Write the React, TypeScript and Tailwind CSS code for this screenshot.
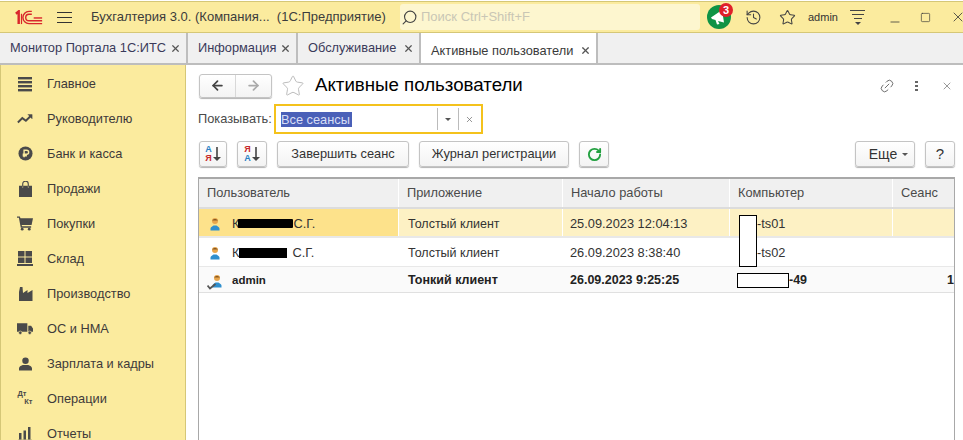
import { ArrowLeft, ArrowRight, Star, History, Link2, RotateCw, Search, X, Minus, Square } from "lucide-react";

const F = "font-['Liberation_Sans',Arial,sans-serif]";

function MenuIcon({ name }: { name: string }) {
  const c = "#4a4a4a";
  switch (name) {
    case "main":
      return (
        <svg width="16" height="16" viewBox="0 0 16 16" fill={c}>
          <rect x="1" y="1" width="14" height="2.4" />
          <rect x="1" y="5" width="14" height="2.4" />
          <rect x="1" y="9" width="14" height="2.4" />
          <rect x="1" y="13" width="14" height="2.4" />
        </svg>
      );
    case "chart":
      return (
        <svg width="17" height="16" viewBox="0 0 18 16" fill="none" stroke={c} strokeWidth="2.2">
          <path d="M1 12l5-5 4 3 6-6" />
          <path d="M12 3h5v5" fill={c} strokeWidth="0.5" />
        </svg>
      );
    case "bank":
      return (
        <svg width="15" height="15" viewBox="0 0 16 16">
          <circle cx="8" cy="8" r="7.5" fill={c} />
          <path d="M6.5 12V4.5h2.7a2 2 0 010 4.3H5M5 10.4h4.5" fill="none" stroke="#fbeb9e" strokeWidth="1.5" />
        </svg>
      );
    case "bag":
      return (
        <svg width="13" height="16" viewBox="0 0 14 17" fill={c}>
          <path d="M0 5h3.5v2h1V5h5v2h1V5H14v12H0z" />
          <path d="M4 6V3a3 3 0 016 0v3" fill="none" stroke={c} strokeWidth="1.2" />
        </svg>
      );
    case "cart":
      return (
        <svg width="17" height="15" viewBox="0 0 17 15" fill={c}>
          <path d="M0 0h3l.7 2H17l-1.5 7H5l.3 1.5H15V12H4L2 1.5H0z" />
          <circle cx="5.5" cy="13.5" r="1.5" />
          <circle cx="13" cy="13.5" r="1.5" />
        </svg>
      );
    case "stock":
      return (
        <svg width="16" height="15" viewBox="0 0 16 15" fill={c}>
          <rect x="1" y="0" width="6.5" height="5.5" />
          <rect x="8.5" y="0" width="6.5" height="5.5" />
          <rect x="1" y="6.5" width="6.5" height="5.5" />
          <rect x="8.5" y="6.5" width="6.5" height="5.5" />
          <rect x="0" y="13" width="16" height="2" />
        </svg>
      );
    case "factory":
      return (
        <svg width="15" height="14" viewBox="0 0 15 14" fill={c}>
          <path d="M1 14V5l1-5h2.500l.5 6 4.500-3v3l5-3v11z" />
        </svg>
      );
    case "truck":
      return (
        <svg width="17" height="12" viewBox="0 0 17 12" fill={c}>
          <path d="M0 0h11v9H0zM12 2.500h3l2 3V9h-5z" />
          <circle cx="3.500" cy="10" r="1.800" stroke="#fbeb9e" strokeWidth="0.6" />
          <circle cx="13.500" cy="10" r="1.800" stroke="#fbeb9e" strokeWidth="0.6" />
        </svg>
      );
    case "user":
      return (
        <svg width="13" height="14" viewBox="0 0 14 14" fill={c}>
          <circle cx="7" cy="3.600" r="3.500" />
          <path d="M0 14v-2.500c0-2 3-3 4-3.500h6c1 .5 4 1.500 4 3.500V14z" />
        </svg>
      );
    case "ops":
      return (
        <div className="flex h-[17px] w-[15px] flex-col text-[7.500px] font-bold leading-[8px] text-[#4a4a4a]">
          <span className="self-start">Дт</span>
          <span className="self-end">Кт</span>
        </div>
      );
    default:
      return (
        <svg width="14" height="14" viewBox="0 0 14 14" fill={c}>
          <rect x="1" y="6" width="2.500" height="6.500" />
          <rect x="5.500" y="3.500" width="2.500" height="9" />
          <rect x="10" y="0" width="2.500" height="12.500" />
          <rect x="0" y="12.800" width="14" height="1.200" />
        </svg>
      );
  }
}

const menu = [
  ["main", "Главное"],
  ["chart", "Руководителю"],
  ["bank", "Банк и касса"],
  ["bag", "Продажи"],
  ["cart", "Покупки"],
  ["stock", "Склад"],
  ["factory", "Производство"],
  ["truck", "ОС и НМА"],
  ["user", "Зарплата и кадры"],
  ["ops", "Операции"],
  ["reports", "Отчеты"],
];

function Logo() {
  return (
    <svg width="30" height="15" viewBox="0 0 30 16" fill="none" stroke="#d9262c">
      <path d="M1 4l3-2.500V15" strokeWidth="2.600" />
      <path d="M7 15V4" strokeWidth="1.300" />
      <path d="M29 14.500H15a6.500 6.500 0 110-13h3" strokeWidth="1.500" />
      <path d="M29 11.500H15a3.500 3.500 0 110-7h3" strokeWidth="1.500" />
      <path d="M20 8.500h9" strokeWidth="1.500" />
    </svg>
  );
}

function PersonIcon({ check }: { check?: boolean }) {
  return (
    <svg width="18" height="18" viewBox="0 0 18 18" className="shrink-0">
      <circle cx={check ? 10 : 8} cy="6" r="3" fill="#e8a64c" />
      <path d={check ? "M7.300 5.500c.7-2 4.700-2 5.400 0z" : "M5.300 5.500c.7-2 4.700-2 5.400 0z"} fill="#8a5a24" />
      <path d={check ? "M5.500 15.500v-2c0-1.500 2.500-2.500 3-3h3c.5.5 3 1.500 3 3v2z" : "M3.500 15.500v-2c0-1.500 2.500-2.500 3-3h3c.5.5 3 1.500 3 3v2z"} fill="#2f8fce" />
      {check && <path d="M.5 13.500l2.500 3L8.500 12" fill="none" stroke="#555" strokeWidth="1.800" />}
    </svg>
  );
}

function Btn({ className, children }: { className: string; children: React.ReactNode }) {
  return (
    <div
      className={`flex h-[26px] shrink-0 items-center justify-center rounded-[3px] border border-[#c4c4c4] bg-gradient-to-b from-white to-[#f3f3f3] text-[12.800px] text-[#333] shadow-[0_1px_1px_rgba(0,0,0,0.3)] ${className}`}
    >
      {children}
    </div>
  );
}

function SortIcon({ reverse }: { reverse?: boolean }) {
  const blue = "text-[#2a7fc4]";
  const red = "text-[#c8282c]";
  return (
    <div className="flex items-center gap-px">
      <div className="flex flex-col text-[9px] font-bold leading-[9px]">
        <span className={reverse ? red : blue}>{reverse ? "Я" : "А"}</span>
        <span className={reverse ? blue : red}>{reverse ? "А" : "Я"}</span>
      </div>
      <svg width="8" height="14" viewBox="0 0 8 14" fill="#444">
        <path d="M3.200 0h1.600v10H8l-4 4-4-4h3.200z" />
      </svg>
    </div>
  );
}

function Cell({ width, className = "", children }: { width: string; className?: string; children?: React.ReactNode }) {
  return <div className={`flex h-full shrink-0 items-center ${width} ${className}`}>{children}</div>;
}

export default function App() {
  return (
    <div className={`${F} flex h-[440px] w-[963px] flex-col overflow-hidden bg-white text-[13px] text-[#333]`}>
      {/* top bar */}
      <div className="mt-px flex h-[32px] shrink-0 items-center border-y border-[#d5c777] bg-[#fbeb9e]">
        <div className="ml-[14px] w-[30px] shrink-0">
          <Logo />
        </div>
        <div className="ml-[13px] flex w-[15px] shrink-0 flex-col gap-[4px]">
          <div className="h-px bg-[#333]" />
          <div className="h-px bg-[#333]" />
          <div className="h-px bg-[#333]" />
        </div>
        <div className="ml-[19px] w-[309px] shrink-0 whitespace-pre text-[13px] text-[#3c3c3c]">Бухгалтерия 3.0. (Компания...  (1С:Предприятие)</div>
        <div className="flex h-[26px] w-[300px] shrink-0 items-center rounded-[3px] bg-[#fdf6cf] pl-[1px]">
          <Search size={17} strokeWidth={1.6} className="shrink-0 -scale-x-100 text-[#444]" />
          <span className="ml-[3px] text-[13px] text-[#c9c6b5]">Поиск Ctrl+Shift+F</span>
        </div>
        <div className="relative ml-[7px] flex h-[24px] w-[24px] shrink-0 items-center justify-center rounded-full bg-[#0f9345]">
          <svg width="16" height="16" viewBox="0 0 16 16" fill="#fff">
            <path d="M0 8.500L11 1l2 12.500L7 12l1.500 3-2.500.5L4.500 11 1 10z" />
          </svg>
          <div className="absolute -right-[2px] -top-[2px] flex h-[14px] w-[14px] items-center justify-center rounded-full bg-[#e0202a] text-[11px] font-bold text-white">3</div>
        </div>
        <History size={17} strokeWidth={1.5} className="ml-[14px] shrink-0 text-[#444]" />
        <Star size={17} strokeWidth={1.5} className="ml-[17px] shrink-0 text-[#444]" />
        <span className="ml-[12px] w-[28px] shrink-0 text-[11px] text-[#333]">admin</span>
        <div className="ml-[14px] flex w-[15px] shrink-0 flex-col items-center gap-[3px]">
          <div className="h-px w-[15px] bg-[#444]" />
          <div className="h-px w-[12px] bg-[#444]" />
          <div className="h-px w-[8px] bg-[#444]" />
          <div className="h-0 w-0 border-x-[3px] border-t-[3px] border-x-transparent border-t-[#444]" />
        </div>
        <Minus size={14} strokeWidth={1.3} className="ml-[23px] mt-[10px] shrink-0 text-[#333]" />
        <Square size={11} strokeWidth={1.4} className="ml-[18px] shrink-0 text-[#333]" />
        <X size={16} strokeWidth={1.200} className="ml-[19px] shrink-0 text-[#333]" />
      </div>

      {/* tabs */}
      <div className="flex h-[32px] shrink-0 border-b-2 border-[#bdbdbd] bg-[#f0f0f0]">
        {[
          ["Монитор Портала 1С:ИТС", "w-[188px]"],
          ["Информация", "w-[110px]"],
          ["Обслуживание", "w-[123px]"],
        ].map(([label, w]) => (
          <div key={label} className={`flex items-center justify-between border-r-2 border-[#bdbdbd] pl-[10px] pr-[5px] text-[12.800px] text-[#3a3a5a] ${w}`}>
            <span>{label}</span>
            <X size={11} strokeWidth={2.600} className="shrink-0 text-[#555]" />
          </div>
        ))}
        <div className="flex w-[177px] flex-col border-r-2 border-[#bdbdbd] bg-white pt-[8px]">
          <div className="flex items-center justify-between pl-[10px] pr-[5px] text-[12.800px] text-[#3a3a3a]">
            <span>Активные пользователи</span>
            <X size={11} strokeWidth={2.600} className="shrink-0 text-[#555]" />
          </div>
          <div className="mx-[3px] mt-[5px] h-[2px] bg-[#0f9345]" />
        </div>
      </div>

      <div className="flex min-h-0 flex-1">
        {/* sidebar */}
        <div className="flex w-[186px] shrink-0 flex-col border-x border-[#d5c777] bg-[#fbeb9e] pt-[1px]">
          {menu.map(([icon, label]) => (
            <div key={label} className="flex h-[35px] shrink-0 items-center">
              <div className="ml-[16px] flex w-[16px] justify-center">
                <MenuIcon name={icon} />
              </div>
              <span className="ml-[14px] text-[12.800px] text-[#3e3a3a]">{label}</span>
            </div>
          ))}
        </div>

        {/* form */}
        <div className="min-w-0 flex-1 pl-[13px] pt-[8px]">
          <div className="flex h-[25px] items-center pr-[10px]">
            <div className="flex h-[24px] w-[73px] shrink-0 rounded-[3px] border border-[#c4c4c4] bg-gradient-to-b from-white to-[#f3f3f3] shadow-[0_1px_1px_rgba(0,0,0,0.3)]">
              <div className="flex w-[36px] items-center justify-center border-r border-[#d8d8d8]">
                <ArrowLeft size={15} strokeWidth={2.800} className="text-[#444]" />
              </div>
              <div className="flex flex-1 items-center justify-center">
                <ArrowRight size={15} strokeWidth={2.800} className="text-[#aaa]" />
              </div>
            </div>
            <Star size={24} strokeWidth={1} className="ml-[9px] shrink-0 text-[#bdbdbd]" />
            <span className="ml-[10px] text-[18.700px] leading-none text-black">Активные пользователи</span>
            <Link2 size={16} strokeWidth={1.200} className="ml-auto shrink-0 -rotate-45 text-[#555]" />
            <div className="ml-[20px] flex shrink-0 flex-col gap-[2px]">
              <div className="h-[2px] w-[3px] bg-[#666]" />
              <div className="h-[2px] w-[3px] bg-[#666]" />
              <div className="h-[2px] w-[3px] bg-[#666]" />
            </div>
            <X size={12} strokeWidth={1.200} className="ml-[23px] shrink-0 text-[#555]" />
          </div>

          <div className="-ml-px mt-[6px] flex h-[30px] items-center">
            <span className="w-[76px] shrink-0 text-[12.800px] text-[#4a4a4a]">Показывать:</span>
            <div className="flex h-[30px] w-[209px] shrink-0 items-center border-2 border-[#f4c21c] pl-[5px]">
              <span className="w-[71px] shrink-0 whitespace-nowrap bg-[#4a60b8] text-[12.800px] leading-[15px] text-[#d8def5]">Все сеансы</span>
              <div className="ml-[85px] h-[22px] border-l border-[#bbb]" />
              <div className="ml-[7px] h-0 w-0 border-x-[3px] border-t-[3px] border-x-transparent border-t-[#555]" />
              <div className="ml-[7px] h-[22px] border-l border-[#bbb]" />
              <X size={9} strokeWidth={1.800} className="ml-[6px] text-[#666]" />
            </div>
          </div>

          <div className="mt-[7px] flex items-center">
            <Btn className="w-[28px]"><SortIcon /></Btn>
            <Btn className="ml-[10px] w-[30px]"><SortIcon reverse /></Btn>
            <Btn className="ml-[10px] w-[132px]">Завершить сеанс</Btn>
            <Btn className="ml-[10px] w-[150px]">Журнал регистрации</Btn>
            <Btn className="ml-[10px] w-[30px]"><RotateCw size={15} strokeWidth={3} className="text-[#22a040]" /></Btn>
            <Btn className="ml-[246px] w-[60px] gap-[5px] pl-[7px] text-[14px]">Еще<div className="h-0 w-0 border-x-[3px] border-t-[3px] border-x-transparent border-t-[#555]" /></Btn>
            <Btn className="ml-[10px] w-[30px] text-[15px]">?</Btn>
          </div>

          {/* table */}
          <div className="-ml-px mt-[10px] h-[263px] w-[757px] overflow-hidden border-x border-t-2 border-[#a8a8a8] border-b-0">
            <div className="flex h-[30px] gap-px border-b-2 border-[#dcdcdc] text-[12.800px] text-[#4a4a4a]">
              <Cell width="w-[199px]" className="bg-[#f0f0f0] pl-[8px]">Пользователь</Cell>
              <Cell width="w-[163px]" className="bg-[#f0f0f0] pl-[8px]">Приложение</Cell>
              <Cell width="w-[166px]" className="bg-[#f0f0f0] pl-[8px]">Начало работы</Cell>
              <Cell width="w-[162px]" className="bg-[#f0f0f0] pl-[8px]">Компьютер</Cell>
              <Cell width="w-[61px]" className="bg-[#f0f0f0] pl-[8px]">Сеанс</Cell>
            </div>
            <div className="flex h-[29px] gap-px border-b-2 border-[#e8e8e8] text-[12.800px] text-[#333]">
              <Cell width="w-[199px]" className="bg-[#fde28b] pl-[8px] pt-[2px]">
                <PersonIcon />
                <span className="ml-[7px]">К</span>
                <span className="ml-[-1px] h-[9px] w-[55px] shrink-0 rounded-[1px] bg-black" />
                <span>С.Г.</span>
              </Cell>
              <Cell width="w-[163px]" className="bg-[#fdf1c4] pl-[9px] pt-[4px] text-[12.500px]">Толстый клиент</Cell>
              <Cell width="w-[166px]" className="bg-[#fdf1c4] pl-[7px] pt-[2px]">25.09.2023 12:04:13</Cell>
              <Cell width="w-[162px]" className="relative bg-[#fdf1c4] pt-[2px]">
                <span className="ml-[27px]">-ts01</span>
                <span className="absolute left-[9px] top-[6px] z-10 h-[52px] w-[18px] border border-black bg-white" />
              </Cell>
              <Cell width="w-[61px]" className="bg-[#fdf1c4]" />
            </div>
            <div className="flex h-[29px] gap-px border-b border-[#e8e8e8] text-[12.800px] text-[#333]">
              <Cell width="w-[199px]" className="pl-[8px] pt-[2px]">
                <PersonIcon />
                <span className="ml-[7px]">К</span>
                <span className="h-[10px] w-[48px] shrink-0 bg-black" />
                <span className="ml-[5px]">С.Г.</span>
              </Cell>
              <Cell width="w-[163px]" className="pl-[9px] pt-[2px] text-[12.500px]">Толстый клиент</Cell>
              <Cell width="w-[166px]" className="pl-[7px] pt-[2px]">26.09.2023 8:38:40</Cell>
              <Cell width="w-[162px]" className="pl-[27px] pt-[2px]">-ts02</Cell>
            </div>
            <div className="flex h-[26px] gap-px border-b border-[#e0e0e0] bg-[#fafafa] text-[12.500px] font-bold text-[#222]">
              <Cell width="w-[199px]" className="pl-[8px] pt-[2px]">
                <PersonIcon check />
                <span className="ml-[7px] text-[11.500px]">admin</span>
              </Cell>
              <Cell width="w-[163px]" className="pl-[9px] pt-[2px]">Тонкий клиент</Cell>
              <Cell width="w-[166px]" className="pl-[7px] pt-[2px]">26.09.2023 9:25:25</Cell>
              <Cell width="w-[162px]" className="pl-[7px] pt-[1px]">
                <span className="h-[15px] w-[52px] shrink-0 border border-black bg-white" />
                <span>-49</span>
              </Cell>
              <Cell width="w-[61px]" className="justify-end pt-[2px]">1</Cell>
            </div>
          </div>
        </div>
      </div>
    </div>
  );
}
